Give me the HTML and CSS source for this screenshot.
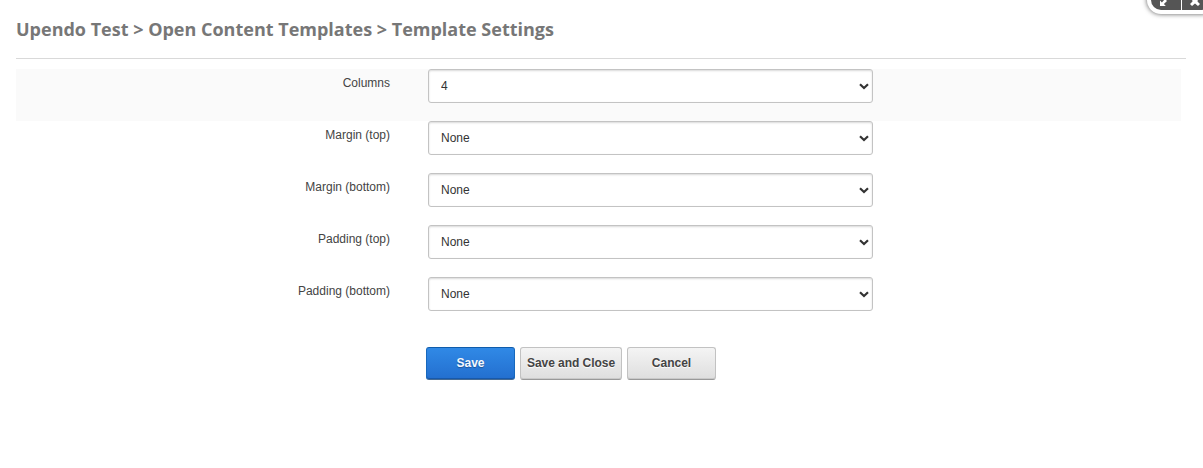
FILE: index.html
```html
<!DOCTYPE html>
<html lang="en">
<head>
<meta charset="utf-8">
<title>Template Settings</title>
<link rel="stylesheet" href="styles.css">
</head>
<body>
<div class="window-controls">
  <button class="control" aria-label="Resize"><svg width="8" height="8" viewBox="0 0 8 8"><path d="M0 7V1.5L1.9 3.4L5 0L7 2L3.9 5.1L5.8 7Z" fill="#fff"/></svg></button>
  <button class="control close" aria-label="Close"><svg width="10" height="8" viewBox="0 0 10 8"><path d="M2 0H8L7.5 2.5L10 5L8 7L5 4.4L2 7L0 5L2.5 2.5Z" fill="#fff"/></svg></button>
</div>
<main>
  <h1>Upendo Test &gt; Open Content Templates &gt; Template Settings</h1>
  <form class="settings">
    <div class="row shaded"><label for="columns">Columns</label><div class="field"><select id="columns"><option>4</option></select><svg class="chevron" width="10" height="7" viewBox="0 0 10 7"><path d="M1 1.2L5 5L9 1.2"/></svg></div></div>
    <div class="row"><label for="mt">Margin (top)</label><div class="field"><select id="mt"><option>None</option></select><svg class="chevron" width="10" height="7" viewBox="0 0 10 7"><path d="M1 1.2L5 5L9 1.2"/></svg></div></div>
    <div class="row"><label for="mb">Margin (bottom)</label><div class="field"><select id="mb"><option>None</option></select><svg class="chevron" width="10" height="7" viewBox="0 0 10 7"><path d="M1 1.2L5 5L9 1.2"/></svg></div></div>
    <div class="row"><label for="pt">Padding (top)</label><div class="field"><select id="pt"><option>None</option></select><svg class="chevron" width="10" height="7" viewBox="0 0 10 7"><path d="M1 1.2L5 5L9 1.2"/></svg></div></div>
    <div class="row"><label for="pb">Padding (bottom)</label><div class="field"><select id="pb"><option>None</option></select><svg class="chevron" width="10" height="7" viewBox="0 0 10 7"><path d="M1 1.2L5 5L9 1.2"/></svg></div></div>
    <div class="actions">
      <button type="button" class="btn primary">Save</button>
      <button type="button" class="btn wide">Save and Close</button>
      <button type="button" class="btn">Cancel</button>
    </div>
  </form>
</main>
</body>
</html>
```
FILE: styles.css
```css
* { box-sizing: border-box; }
body {
  margin: 0;
  height: 468px;
  overflow: hidden;
  background: #fff;
  font: 12px/18px "Liberation Sans", Arial, sans-serif;
  color: #444;
}
main { padding: 0 17px 0 16px; }
h1 {
  margin: 0 0 10px;
  height: 59px;
  padding-top: 17px;
  border-bottom: 1px solid #d9d9d9;
  font: bold 18px/25px "Open Sans", sans-serif;
  color: #777;
}
.settings { margin-right: 5px; }
.row {
  display: grid;
  grid-template-columns: 374px 445px;
  column-gap: 38px;
  height: 52px;
}
.shaded { background: #fafafa; }
label { padding-top: 5px; text-align: right; }
.field { position: relative; height: 34px; }
select {
  appearance: none;
  width: 100%;
  height: 34px;
  padding: 0 12px;
  border: 1px solid #c3c3c3;
  border-radius: 3px;
  background: #fff;
  box-shadow: inset 0 1px 2px rgba(0, 0, 0, .15);
  font: 12px/18px "Liberation Sans", Arial, sans-serif;
  color: #333;
}
.chevron {
  position: absolute;
  right: 4px;
  top: 14px;
  fill: none;
  stroke: #333;
  stroke-width: 2.2;
}
.actions { display: flex; gap: 5px; padding: 18px 0 0 410px; }
.btn {
  width: 89px;
  height: 33px;
  padding: 0 0 2px;
  border: 1px solid #c2c2c2;
  border-bottom-color: #999;
  border-radius: 3px;
  background: linear-gradient(#f4f4f4, #dedede);
  box-shadow: inset 0 -1px 0 #c9c9c9;
  font: bold 12px/18px "Liberation Sans", Arial, sans-serif;
  color: #444;
  text-shadow: 0 1px 1px #fff;
}
.wide { width: 102px; white-space: nowrap; letter-spacing: -.04px; }
.primary {
  border-color: #0f5cab #1768bd #456b94;
  background: linear-gradient(#3089e6, #236fcf);
  box-shadow: inset 0 -1px 0 #1759ab;
  color: #f4f8fd;
  text-shadow: 0 1px 1px rgba(0, 0, 0, .3);
}
.window-controls {
  position: absolute;
  top: -14px;
  right: -13px;
  display: flex;
  gap: 1px;
  width: 69px;
  height: 28px;
  padding: 4px;
  border-radius: 14px;
  background: #fff;
  box-shadow: 0 0 5px rgba(0, 0, 0, .65);
}
.control {
  flex: none;
  width: 30px;
  height: 20px;
  padding: 8px 0 0 9px;
  border: 0;
  border-radius: 10px 0 0 10px;
  background: #555;
  text-align: left;
  line-height: 0;
}
.control svg { display: block; margin-top: -2px; }
.close { border-radius: 0 10px 10px 0; padding-left: 8px; }
```
